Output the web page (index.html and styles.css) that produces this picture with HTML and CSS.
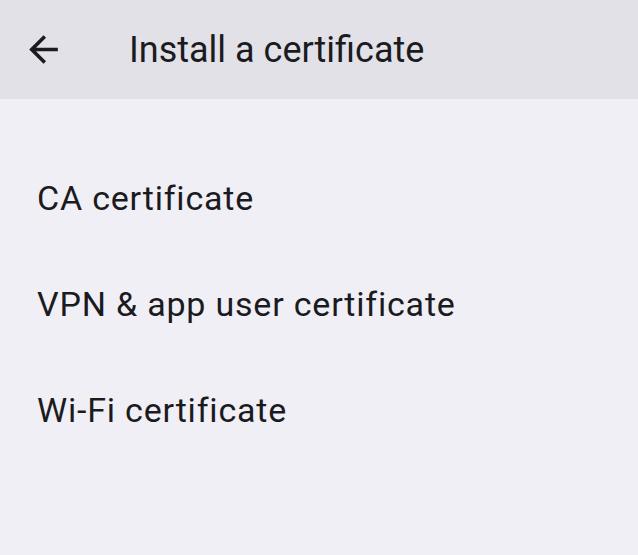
FILE: index.html
```html
<!DOCTYPE html>
<html>
<head>
<meta charset="utf-8">
<link rel="stylesheet" href="styles.css">
</head>
<body>
<div class="app">
  <header class="bar">
    <svg class="back" viewBox="0 0 24 24" width="43" height="43"><path d="M20 11H7.83l5.59-5.59L12 4l-8 8 8 8 1.41-1.41L7.83 13H20v-2z" fill="#1b1b1f"/></svg>
    <h1 class="title">Install a certificate</h1>
  </header>
  <ul class="list">
    <li class="item">CA certificate</li>
    <li class="item">VPN &amp; app user certificate</li>
    <li class="item">Wi-Fi certificate</li>
  </ul>
</div>
</body>
</html>
```
FILE: styles.css
```css
html, body {
  margin: 0;
  padding: 0;
  background: #f0eff5;
}
.app {
  width: 638px;
  height: 555px;
  font-family: Roboto, "Noto Sans", sans-serif;
  color: #1b1b1f;
  background: #f0eff5;
}
.bar {
  height: 99px;
  background: #e2e1e8;
  display: flex;
  align-items: center;
  padding-left: 22px;
  box-sizing: border-box;
}
.back {
  flex: none;
  margin-top: -1px;
}
.title {
  margin: 0 0 0 64px;
  font-size: 36px;
  font-weight: 400;
  line-height: 1;
  letter-spacing: 0;
}
.list {
  list-style: none;
  margin: 0;
  padding: 0;
  padding-top: 46px;
}
.item {
  height: 106px;
  padding-left: 37px;
  font-size: 34px;
  letter-spacing: 0.8px;
  line-height: 106px;
  box-sizing: border-box;
}
```
